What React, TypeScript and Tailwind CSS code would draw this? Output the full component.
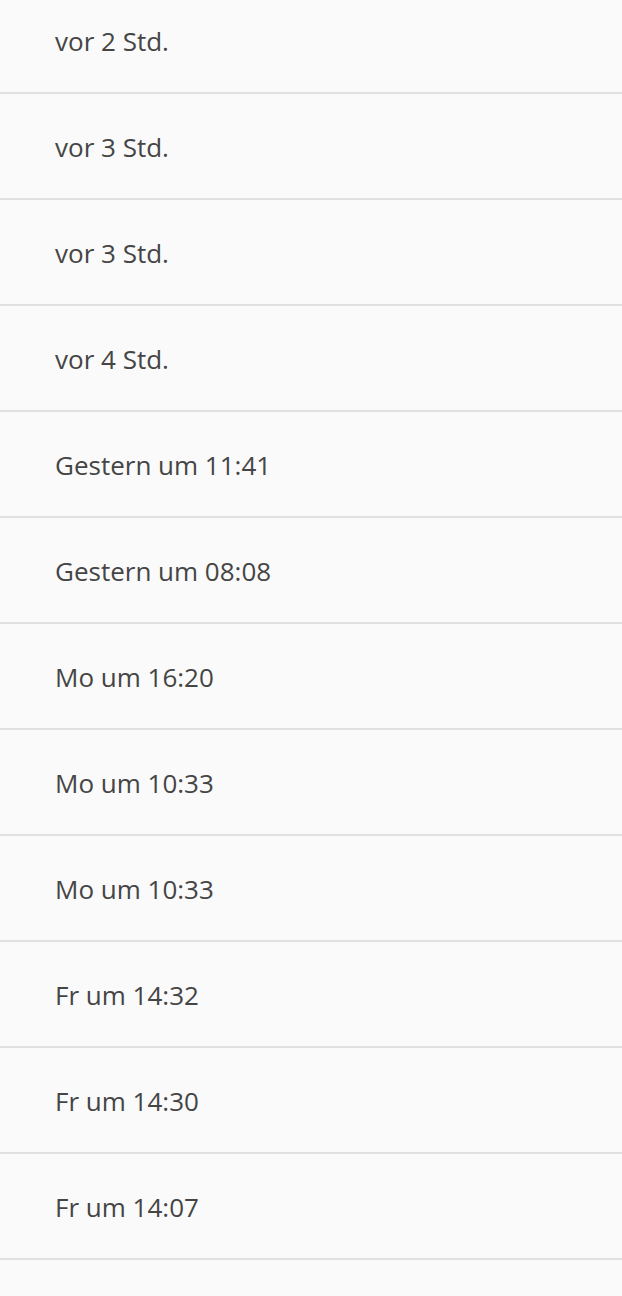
import React from "react";

const items = [
  "vor 2 Std.",
  "vor 3 Std.",
  "vor 3 Std.",
  "vor 4 Std.",
  "Gestern um 11:41",
  "Gestern um 08:08",
  "Mo um 16:20",
  "Mo um 10:33",
  "Mo um 10:33",
  "Fr um 14:32",
  "Fr um 14:30",
  "Fr um 14:07",
];

export default function App() {
  return (
    <div className="h-[1296px] w-[622px] overflow-hidden bg-[#fafafa]" style={{ fontFamily: '"Open Sans", "Noto Sans", sans-serif' }}>
      <div className="-mt-[12px] flex flex-col">
        {items.map((t, i) => (
          <div key={i} className="flex h-[106px] shrink-0 items-center border-b-2 border-[#e0e0e0] pl-[55px] pt-[3px] text-[26px] text-[#454545]">
            {t}
          </div>
        ))}
      </div>
    </div>
  );
}
